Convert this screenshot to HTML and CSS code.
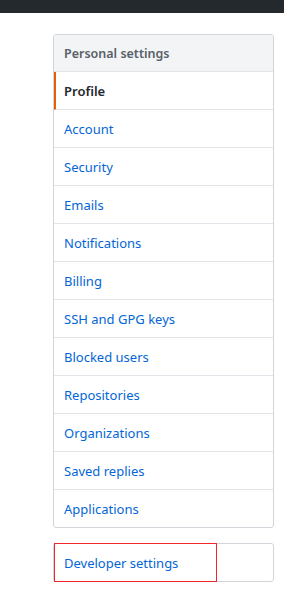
FILE: index.html
```html
<!DOCTYPE html>
<html lang="en">
  <head>
    <meta charset="UTF-8" />
    <meta name="viewport" content="width=device-width, initial-scale=1.0" />
    <title>Settings</title>
    <link rel="stylesheet" href="styles.css">
  </head>

  <body>
    <div id="topbar"></div>
    <div id="sidebar">
      <nav class="menu">
        <div class="menu-heading">Personal settings</div>
        <a class="menu-item selected" href="#">Profile</a>
        <a class="menu-item" href="#">Account</a>
        <a class="menu-item" href="#">Security</a>
        <a class="menu-item" href="#">Emails</a>
        <a class="menu-item" href="#">Notifications</a>
        <a class="menu-item" href="#">Billing</a>
        <a class="menu-item" href="#">SSH and GPG keys</a>
        <a class="menu-item" href="#">Blocked users</a>
        <a class="menu-item" href="#">Repositories</a>
        <a class="menu-item" href="#">Organizations</a>
        <a class="menu-item" href="#">Saved replies</a>
        <a class="menu-item" href="#">Applications</a>
      </nav>
      <nav class="menu dev">
        <a class="menu-item" href="#">Developer settings</a>
        <span class="highlight"></span>
      </nav>
    </div>
  </body>
</html>
```

FILE: styles.css
```css
body {
  margin: 0;
  background: #fff;
  font-family: "Noto Sans", "Open Sans", sans-serif;
  font-size: 13px;
}

#topbar {
  height: 13px;
  background: #24292e;
}

#sidebar {
  padding: 21px 0 0 53px;
}

.menu {
  width: 219px;
  border: 1px solid #d1d5da;
  border-radius: 3px;
  display: flex;
  flex-direction: column;
  overflow: hidden;
}

.menu-heading {
  height: 34px;
  padding-top: 2px;
  line-height: 34px;
  padding-left: 10px;
  background: #f3f4f6;
  color: #586069;
  font-weight: 600;
  font-size: 12.5px;
  border-bottom: 1px solid #e1e4e8;
}

.menu-item {
  display: block;
  height: 35px;
  padding-top: 2px;
  line-height: 35px;
  padding-left: 10px;
  color: #0366d6;
  text-decoration: none;
  border-bottom: 1px solid #e1e4e8;
}

.menu-item:last-child {
  border-bottom: none;
}

.menu-item.selected {
  color: #24292e;
  font-weight: 600;
  padding-left: 8px;
  border-left: 2px solid #e36209;
}

.dev {
  margin-top: 15px;
  position: relative;
  overflow: visible;
}

.dev .menu-item {
  border-bottom: none;
}

.highlight {
  position: absolute;
  left: 0;
  top: -1px;
  width: 161px;
  height: 37px;
  border: 1px solid #f0282d;
}
```
